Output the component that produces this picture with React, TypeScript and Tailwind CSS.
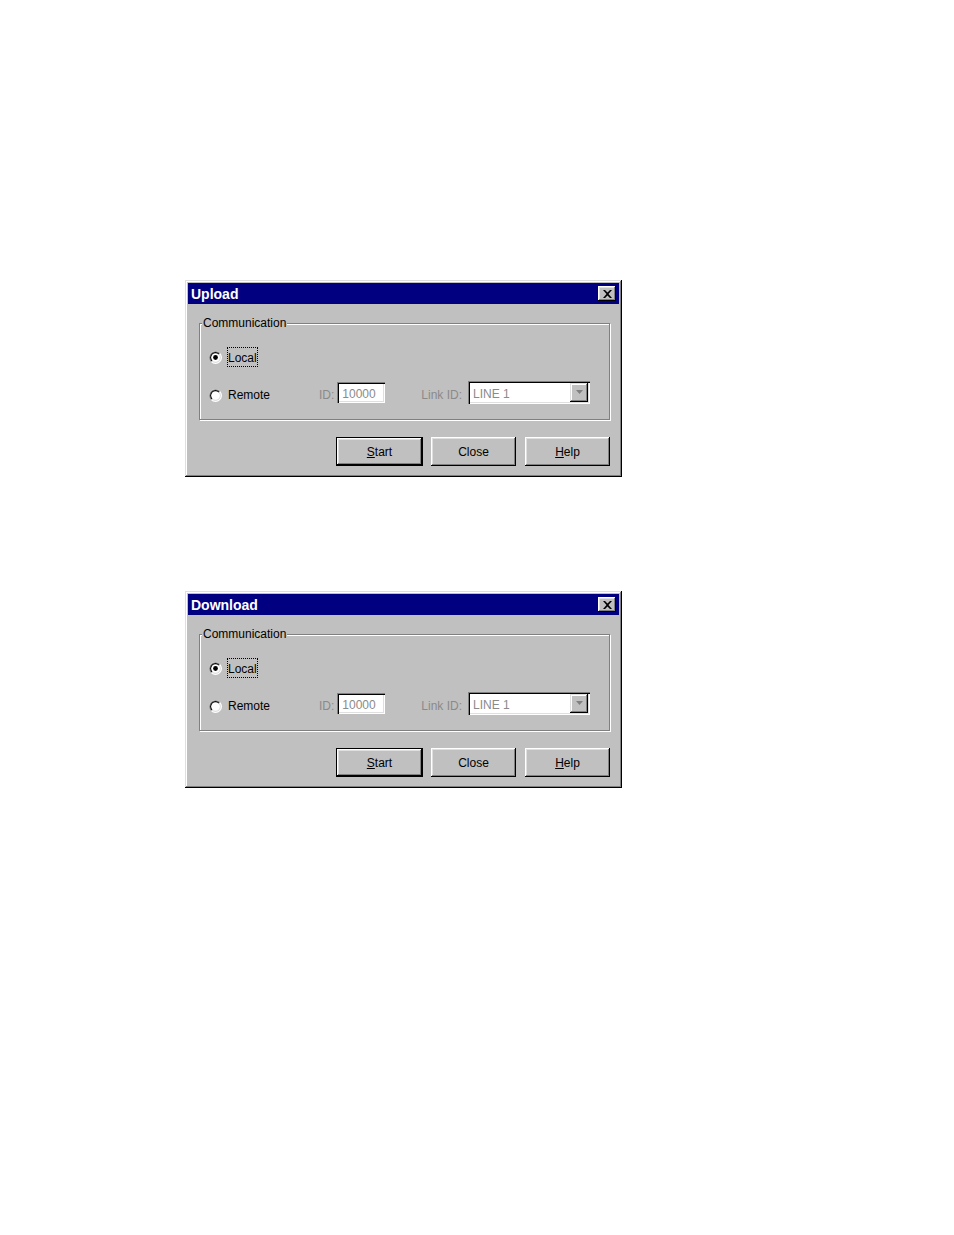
import React from 'react';

const font = { fontFamily: '"Liberation Sans", Arial, sans-serif' };

function Radio({ checked }: { checked?: boolean }) {
  return (
    <svg width="13" height="13" viewBox="0 0 12 12" className="shrink-0">
      <circle cx="6" cy="6" r="6" fill="#fff" />
      <path d="M10.24 1.76 A6 6 0 0 0 1.76 10.24 Z" fill="#808080" />
      <circle cx="6" cy="6" r="5" fill="#dfdfdf" />
      <path d="M9.54 2.46 A5 5 0 0 0 2.46 9.54 Z" fill="#000" />
      <circle cx="6" cy="6" r="4" fill="#fff" />
      {checked && <circle cx="6" cy="6" r="2.2" fill="#000" />}
    </svg>
  );
}

function Button({ children, isDefault }: { children: React.ReactNode; isDefault?: boolean }) {
  if (isDefault) {
    return (
      <div className="mr-[-1px] h-[29px] w-[87px] border border-black">
        <div className="flex h-full w-full items-center justify-center bg-[#c0c0c0] text-[12px] text-black shadow-[inset_-1px_-1px_0_#000,inset_1px_1px_0_#fff,inset_-2px_-2px_0_#808080,inset_2px_2px_0_#dfdfdf]">
          {children}
        </div>
      </div>
    );
  }
  return (
    <div className="flex h-[29px] w-[85px] items-center justify-center bg-[#c0c0c0] text-[12px] text-black shadow-[inset_-1px_-1px_0_#000,inset_1px_1px_0_#fff,inset_-2px_-2px_0_#808080,inset_2px_2px_0_#dfdfdf]">
      {children}
    </div>
  );
}

function Dialog({ title }: { title: string }) {
  return (
    <div
      className="flex h-[197px] w-[437px] flex-col bg-[#c0c0c0] p-[3px] shadow-[inset_-1px_-1px_0_#000,inset_1px_1px_0_#dfdfdf,inset_-2px_-2px_0_#808080,inset_2px_2px_0_#fff]"
      style={font}
    >
      {/* Title bar */}
      <div className="flex h-[21px] items-center justify-between bg-[#000080] pl-[3px] pr-[3px]">
        <span className="text-[14px] font-bold leading-none text-white">{title}</span>
        <div className="flex h-[15px] w-[18px] items-center justify-center bg-[#c0c0c0] shadow-[inset_-1px_-1px_0_#000,inset_1px_1px_0_#fff,inset_-2px_-2px_0_#808080,inset_2px_2px_0_#dfdfdf]">
          <svg width="9" height="8" viewBox="0 0 9 8">
            <path d="M0 0h2l2.5 2.5L7 0h2L5.5 4 9 8H7L4.5 5.5 2 8H0l3.5-4z" fill="#000" />
          </svg>
        </div>
      </div>

      <div className="flex flex-col pl-[11px] pr-[9px]">
        {/* Group box */}
        <div className="relative mt-[19px] h-[97px] border border-[#808080] pl-[9px] pt-[23px] shadow-[1px_1px_0_#fff,inset_1px_1px_0_#fff]">
          <span className="absolute -top-[8px] left-[2px] bg-[#c0c0c0] px-[1px] text-[12px] leading-[15px] text-black">
            Communication
          </span>

          <div className="flex h-[20px] items-center">
            <Radio checked />
            <div className="ml-[5px] flex h-[20px] items-center border border-dotted border-black pt-[1px] text-[12px] text-black">
              Local
            </div>
          </div>

          <div className="mt-[14px] flex h-[22px] items-center text-[12px]">
            <div className="flex w-[110px] items-center">
              <div className="pt-[6px]">
                <Radio />
              </div>
              <span className="ml-[6px] pt-[5px] text-black">Remote</span>
            </div>
            <span className="pt-[5px] text-[#8a8a8a]">ID:</span>
            <div className="ml-[3px] flex h-[21px] w-[48px] items-center bg-white pl-[5px] pt-[4px] text-[#8a8a8a] shadow-[inset_1px_1px_0_#808080,inset_2px_2px_0_#000,inset_-1px_-1px_0_#fff,inset_-2px_-2px_0_#dfdfdf]">
              10000
            </div>
            <span className="ml-[36px] pt-[5px] text-[#8a8a8a]">Link ID:</span>
            <div className="ml-[6px] flex h-[23px] w-[122px] items-center justify-between bg-white pl-[5px] pr-[2px] text-[#8a8a8a] shadow-[inset_1px_1px_0_#808080,inset_2px_2px_0_#000,inset_-1px_-1px_0_#fff,inset_-2px_-2px_0_#dfdfdf]">
              <span className="pt-[4px]">LINE 1</span>
              <div className="flex h-[19px] w-[18px] items-center justify-center bg-[#c0c0c0] shadow-[inset_-1px_-1px_0_#000,inset_1px_1px_0_#dfdfdf,inset_-2px_-2px_0_#808080,inset_2px_2px_0_#fff]">
                <svg width="7" height="4" viewBox="0 0 7 4">
                  <path d="M0 0h7L3.5 4z" fill="#808080" />
                </svg>
              </div>
            </div>
          </div>
        </div>

        {/* Buttons */}
        <div className="mt-[17px] flex justify-end gap-[9px]">
          <Button isDefault>
            <span>
              <span className="underline">S</span>tart
            </span>
          </Button>
          <Button>Close</Button>
          <Button>
            <span>
              <span className="underline">H</span>elp
            </span>
          </Button>
        </div>
      </div>
    </div>
  );
}

export default function App() {
  return (
    <div className="flex min-h-[1235px] flex-col gap-[114px] bg-white pl-[185px] pt-[280px]">
      <Dialog title="Upload" />
      <Dialog title="Download" />
    </div>
  );
}
